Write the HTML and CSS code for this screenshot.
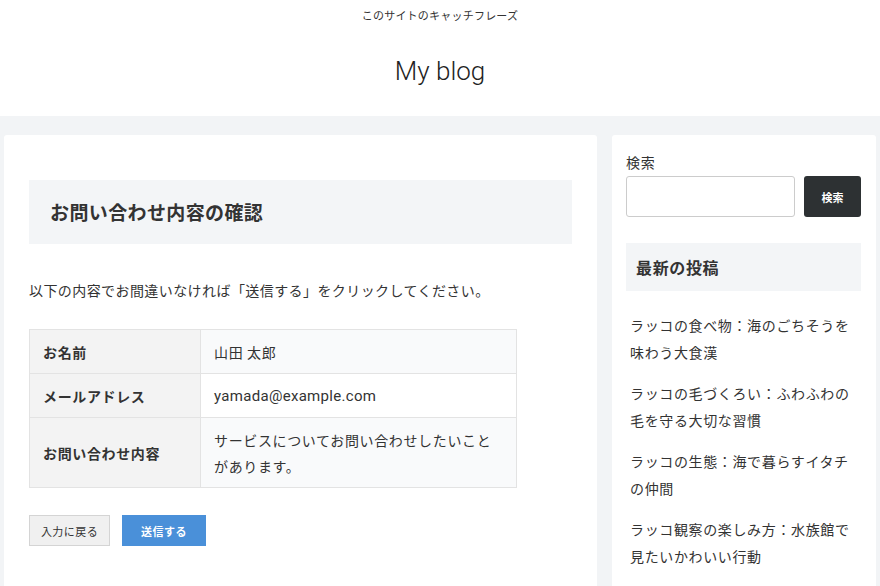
FILE: index.html
```html
<!DOCTYPE html>
<html lang="ja">
<head>
    <meta charset="UTF-8">
    <title>お問い合わせ内容の確認 - My blog</title>
    <link rel="stylesheet" href="styles.css">
</head>
<body>
    <header class="site-header">
        <p class="tagline">このサイトのキャッチフレーズ</p>
        <h1 class="site-title">My blog</h1>
    </header>

    <div class="wrap">
        <main class="main-card">
            <h2 class="page-title">お問い合わせ内容の確認</h2>
            <p class="lead">以下の内容でお間違いなければ「送信する」をクリックしてください。</p>
            <table class="confirm-table">
                <tr>
                    <th>お名前</th>
                    <td>山田 太郎</td>
                </tr>
                <tr>
                    <th>メールアドレス</th>
                    <td class="mail">yamada@example.com</td>
                </tr>
                <tr>
                    <th>お問い合わせ内容</th>
                    <td>サービスについてお問い合わせしたいことがあります。</td>
                </tr>
            </table>
            <div class="actions">
                <button class="btn-back">入力に戻る</button>
                <button class="btn-send">送信する</button>
            </div>
        </main>

        <aside class="sidebar">
            <label class="search-label" for="s">検索</label>
            <div class="search-row">
                <input type="text" id="s" class="search-input">
                <button class="search-btn">検索</button>
            </div>
            <h3 class="widget-title">最新の投稿</h3>
            <ul class="recent-posts">
                <li><a href="#">ラッコの食べ物：海のごちそうを味わう大食漢</a></li>
                <li><a href="#">ラッコの毛づくろい：ふわふわの毛を守る大切な習慣</a></li>
                <li><a href="#">ラッコの生態：海で暮らすイタチの仲間</a></li>
                <li><a href="#">ラッコ観察の楽しみ方：水族館で見たいかわいい行動</a></li>
            </ul>
        </aside>
    </div>
</body>
</html>
```

FILE: styles.css
```css
/* 基本 */
* { margin: 0; padding: 0; box-sizing: border-box; }
body { font-family: 'Noto Sans CJK JP', 'Noto Sans', sans-serif; color: #333; background: #f2f4f6; line-height: 1.6; letter-spacing: 0.04em; height: 586px; overflow: hidden; }

/* ヘッダー */
.site-header { background: #fff; height: 116px; text-align: center; padding-top: 6px; }
.tagline { font-size: 11px; color: #333; line-height: 18px; letter-spacing: 0.02em; }
.site-title { font-family: 'Roboto', 'Noto Sans', sans-serif; font-weight: 300; font-size: 26px; color: #222; margin-top: 31px; line-height: 32px; letter-spacing: 0; }

/* レイアウト */
.wrap { display: flex; gap: 15px; padding: 19px 4px 0 4px; align-items: flex-start; }
.main-card { background: #fff; width: 593px; padding: 45px 25px 60px 25px; border-radius: 3px; min-height: 480px; }
.sidebar { background: #fff; flex: 1; padding: 16px 15px 20px 14px; border-radius: 3px; min-height: 480px; }

/* 本文 */
.page-title { background: #f3f5f7; font-size: 19px; font-weight: 700; color: #333; padding: 0 21px; height: 64px; line-height: 64px; letter-spacing: 0.02em; }
.lead { font-size: 14px; margin-top: 34px; line-height: 24px; letter-spacing: 0.03em; }

.confirm-table { margin-top: 27px; width: 488px; border-collapse: collapse; font-size: 14px; }
.confirm-table th, .confirm-table td { border: 1px solid #e3e3e3; text-align: left; vertical-align: middle; padding: 9px 12px 8px 13px; line-height: 26px; }
.confirm-table th { width: 171px; background: #f3f3f3; font-weight: 700; }
.confirm-table td { background: #fff; }
.confirm-table tr:nth-child(odd) td { background: #f9fafb; }
.confirm-table td.mail { font-family: 'Roboto', 'Noto Sans', sans-serif; font-size: 15px; letter-spacing: 0.02em; }

.actions { display: flex; gap: 12px; margin-top: 27px; }
.actions button { font-family: inherit; font-size: 11px; height: 31px; cursor: pointer; letter-spacing: 0.04em; }
.btn-back { width: 81px; background: #f0f0f0; border: 1px solid #d4d4d4; color: #333; }
.btn-send { width: 84px; background: #4a90d9; border: none; color: #fff; font-weight: 700; }

/* サイドバー */
.search-label { display: block; font-size: 14px; line-height: 22px; }
.search-row { display: flex; gap: 9px; margin-top: 3px; }
.search-input { width: 169px; height: 41px; border: 1px solid #ccc; border-radius: 3px; }
.search-btn { flex: 1; height: 41px; background: #2d3133; color: #fff; border: none; border-radius: 3px; font-family: inherit; font-size: 11px; font-weight: 700; }

.widget-title { margin-top: 26px; background: #f3f5f7; font-size: 16px; font-weight: 700; height: 48px; line-height: 48px; padding: 0 10px; }
.recent-posts { list-style: none; margin-top: 21px; padding: 0 6px 0 4px; }
.recent-posts li { font-size: 14px; line-height: 27px; margin-bottom: 14px; }
.recent-posts a { color: #333; text-decoration: none; }
```
